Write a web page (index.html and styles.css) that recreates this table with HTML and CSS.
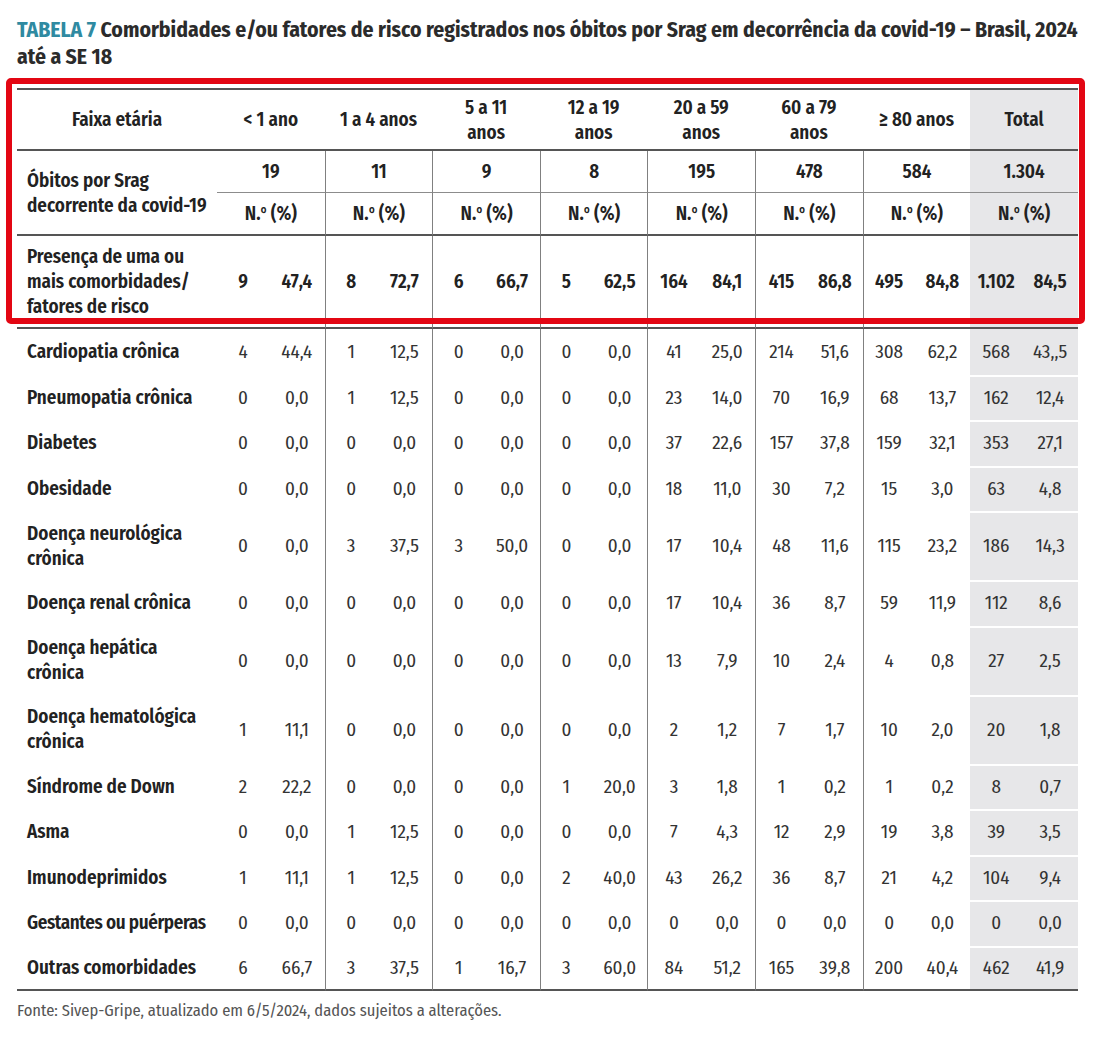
FILE: index.html
```html
<!DOCTYPE html>
<html lang="pt-BR">
<head>
<meta charset="utf-8">
<title>Tabela 7</title>
<link rel="stylesheet" href="styles.css">
</head>
<body>
<div class="page">
  <h1 class="title"><span class="tag">TABELA 7</span> Comorbidades e/ou fatores de risco registrados nos óbitos por Srag em decorrência da covid-19 – Brasil, 2024<br>até a SE 18</h1>
  <div class="wrap">
    <table class="data">
      <colgroup>
        <col class="c-lab">
        <col class="c-n"><col class="c-p"><col class="c-n"><col class="c-p">
        <col class="c-n"><col class="c-p"><col class="c-n"><col class="c-p">
        <col class="c-n"><col class="c-p"><col class="c-n"><col class="c-p">
        <col class="c-n"><col class="c-p"><col class="c-n"><col class="c-p">
      </colgroup>
      <thead>
        <tr class="r1">
          <th class="hlab">Faixa etária</th>
          <th colspan="2">&lt; 1 ano</th>
          <th colspan="2">1 a 4 anos</th>
          <th colspan="2">5 a 11<br>anos</th>
          <th colspan="2">12 a 19<br>anos</th>
          <th colspan="2">20 a 59<br>anos</th>
          <th colspan="2">60 a 79<br>anos</th>
          <th colspan="2">≥ 80 anos</th>
          <th colspan="2" class="t">Total</th>
        </tr>
        <tr class="r2">
          <th rowspan="2" class="lab obitos">Óbitos por Srag<br>decorrente da covid-19</th>
          <td colspan="2">19</td>
          <td colspan="2" class="s">11</td>
          <td colspan="2" class="s">9</td>
          <td colspan="2" class="s">8</td>
          <td colspan="2" class="s">195</td>
          <td colspan="2" class="s">478</td>
          <td colspan="2" class="s">584</td>
          <td colspan="2" class="t">1.304</td>
        </tr>
        <tr class="r3">
          <td colspan="2">N.<span class="ord">º</span> (%)</td>
          <td colspan="2" class="s">N.<span class="ord">º</span> (%)</td>
          <td colspan="2" class="s">N.<span class="ord">º</span> (%)</td>
          <td colspan="2" class="s">N.<span class="ord">º</span> (%)</td>
          <td colspan="2" class="s">N.<span class="ord">º</span> (%)</td>
          <td colspan="2" class="s">N.<span class="ord">º</span> (%)</td>
          <td colspan="2" class="s">N.<span class="ord">º</span> (%)</td>
          <td colspan="2" class="t">N.<span class="ord">º</span> (%)</td>
        </tr>
        <tr class="pres">
          <th class="lab">Presença de uma ou<br>mais comorbidades/<br>fatores de risco</th>
          <td>9</td><td>47,4</td>
          <td class="s">8</td><td>72,7</td>
          <td class="s">6</td><td>66,7</td>
          <td class="s">5</td><td>62,5</td>
          <td class="s">164</td><td>84,1</td>
          <td class="s">415</td><td>86,8</td>
          <td class="s">495</td><td>84,8</td>
          <td class="t">1.102</td><td class="t">84,5</td>
        </tr>
      </thead>
      <tbody>
        <tr>
          <th class="lab">Cardiopatia crônica</th>
          <td>4</td><td>44,4</td><td class="s">1</td><td>12,5</td><td class="s">0</td><td>0,0</td><td class="s">0</td><td>0,0</td>
          <td class="s">41</td><td>25,0</td><td class="s">214</td><td>51,6</td><td class="s">308</td><td>62,2</td><td class="t">568</td><td class="t">43,,5</td>
        </tr>
        <tr>
          <th class="lab">Pneumopatia crônica</th>
          <td>0</td><td>0,0</td><td class="s">1</td><td>12,5</td><td class="s">0</td><td>0,0</td><td class="s">0</td><td>0,0</td>
          <td class="s">23</td><td>14,0</td><td class="s">70</td><td>16,9</td><td class="s">68</td><td>13,7</td><td class="t">162</td><td class="t">12,4</td>
        </tr>
        <tr>
          <th class="lab">Diabetes</th>
          <td>0</td><td>0,0</td><td class="s">0</td><td>0,0</td><td class="s">0</td><td>0,0</td><td class="s">0</td><td>0,0</td>
          <td class="s">37</td><td>22,6</td><td class="s">157</td><td>37,8</td><td class="s">159</td><td>32,1</td><td class="t">353</td><td class="t">27,1</td>
        </tr>
        <tr>
          <th class="lab">Obesidade</th>
          <td>0</td><td>0,0</td><td class="s">0</td><td>0,0</td><td class="s">0</td><td>0,0</td><td class="s">0</td><td>0,0</td>
          <td class="s">18</td><td>11,0</td><td class="s">30</td><td>7,2</td><td class="s">15</td><td>3,0</td><td class="t">63</td><td class="t">4,8</td>
        </tr>
        <tr class="dbl">
          <th class="lab">Doença neurológica<br>crônica</th>
          <td>0</td><td>0,0</td><td class="s">3</td><td>37,5</td><td class="s">3</td><td>50,0</td><td class="s">0</td><td>0,0</td>
          <td class="s">17</td><td>10,4</td><td class="s">48</td><td>11,6</td><td class="s">115</td><td>23,2</td><td class="t">186</td><td class="t">14,3</td>
        </tr>
        <tr>
          <th class="lab">Doença renal crônica</th>
          <td>0</td><td>0,0</td><td class="s">0</td><td>0,0</td><td class="s">0</td><td>0,0</td><td class="s">0</td><td>0,0</td>
          <td class="s">17</td><td>10,4</td><td class="s">36</td><td>8,7</td><td class="s">59</td><td>11,9</td><td class="t">112</td><td class="t">8,6</td>
        </tr>
        <tr class="dbl">
          <th class="lab">Doença hepática<br>crônica</th>
          <td>0</td><td>0,0</td><td class="s">0</td><td>0,0</td><td class="s">0</td><td>0,0</td><td class="s">0</td><td>0,0</td>
          <td class="s">13</td><td>7,9</td><td class="s">10</td><td>2,4</td><td class="s">4</td><td>0,8</td><td class="t">27</td><td class="t">2,5</td>
        </tr>
        <tr class="dbl">
          <th class="lab">Doença hematológica<br>crônica</th>
          <td>1</td><td>11,1</td><td class="s">0</td><td>0,0</td><td class="s">0</td><td>0,0</td><td class="s">0</td><td>0,0</td>
          <td class="s">2</td><td>1,2</td><td class="s">7</td><td>1,7</td><td class="s">10</td><td>2,0</td><td class="t">20</td><td class="t">1,8</td>
        </tr>
        <tr>
          <th class="lab">Síndrome de Down</th>
          <td>2</td><td>22,2</td><td class="s">0</td><td>0,0</td><td class="s">0</td><td>0,0</td><td class="s">1</td><td>20,0</td>
          <td class="s">3</td><td>1,8</td><td class="s">1</td><td>0,2</td><td class="s">1</td><td>0,2</td><td class="t">8</td><td class="t">0,7</td>
        </tr>
        <tr>
          <th class="lab">Asma</th>
          <td>0</td><td>0,0</td><td class="s">1</td><td>12,5</td><td class="s">0</td><td>0,0</td><td class="s">0</td><td>0,0</td>
          <td class="s">7</td><td>4,3</td><td class="s">12</td><td>2,9</td><td class="s">19</td><td>3,8</td><td class="t">39</td><td class="t">3,5</td>
        </tr>
        <tr>
          <th class="lab">Imunodeprimidos</th>
          <td>1</td><td>11,1</td><td class="s">1</td><td>12,5</td><td class="s">0</td><td>0,0</td><td class="s">2</td><td>40,0</td>
          <td class="s">43</td><td>26,2</td><td class="s">36</td><td>8,7</td><td class="s">21</td><td>4,2</td><td class="t">104</td><td class="t">9,4</td>
        </tr>
        <tr>
          <th class="lab tight">Gestantes ou puérperas</th>
          <td>0</td><td>0,0</td><td class="s">0</td><td>0,0</td><td class="s">0</td><td>0,0</td><td class="s">0</td><td>0,0</td>
          <td class="s">0</td><td>0,0</td><td class="s">0</td><td>0,0</td><td class="s">0</td><td>0,0</td><td class="t">0</td><td class="t">0,0</td>
        </tr>
        <tr class="last">
          <th class="lab">Outras comorbidades</th>
          <td>6</td><td>66,7</td><td class="s">3</td><td>37,5</td><td class="s">1</td><td>16,7</td><td class="s">3</td><td>60,0</td>
          <td class="s">84</td><td>51,2</td><td class="s">165</td><td>39,8</td><td class="s">200</td><td>40,4</td><td class="t">462</td><td class="t">41,9</td>
        </tr>
      </tbody>
    </table>
    <div class="highlight"></div>
  </div>
  <p class="source">Fonte: Sivep-Gripe, atualizado em 6/5/2024, dados sujeitos a alterações.</p>
</div>
</body>
</html>
```
FILE: styles.css
```css
html, body {
  margin: 0;
  background: #ffffff;
}

body {
  font-family: "Fira Sans Condensed", "Open Sans", "Noto Sans", sans-serif;
  font-stretch: 75%;
  color: #222222;
}

.page {
  padding: 0 0 0 17px;
  width: 1061px;
}

.title {
  margin: 17px 0 17px;
  font-size: 21.6px;
  line-height: 27px;
  font-weight: 700;
  color: #2b2b2b;
  white-space: nowrap;
}

.title .tag {
  color: #2f8aa1;
}

.wrap {
  position: relative;
}

.highlight {
  position: absolute;
  left: -11px;
  top: -10px;
  width: 1079px;
  height: 246px;
  box-sizing: border-box;
  border: 6px solid #e30613;
  border-radius: 5px;
  pointer-events: none;
}

.data {
  border-collapse: separate;
  border-spacing: 0;
  table-layout: fixed;
  width: 1061px;
}

.c-lab { width: 200px; }
.c-n { width: 52px; }
.c-p { width: 55.6px; }

.data th,
.data td {
  padding: 0;
  font-size: 19px;
  line-height: 25px;
  text-align: center;
  vertical-align: middle;
  color: #333333;
}

.data th {
  font-weight: 600;
  color: #222222;
}

.data td {
  font-weight: 400;
}

.data .lab {
  text-align: left;
  padding-left: 10px;
}

.data .tight {
  letter-spacing: -0.4px;
}

.ord {
  font-family: "Open Sans", sans-serif;
  font-stretch: 75%;
}

/* header row */
.r1 { height: 63px; }
.r1 th {
  border-top: 2px solid #555555;
  border-bottom: 2px solid #555555;
}

.r2 { height: 42px; }
.r2 td {
  border-bottom: 1px solid #8c8c8c;
  font-weight: 600;
  color: #222222;
}

.r3 { height: 43px; }
.r3 td,
.r2 .obitos {
  border-bottom: 2px solid #555555;
}
.r3 td {
  font-weight: 600;
  color: #222222;
}

.pres { height: 93px; }
.pres th,
.pres td {
  border-bottom: 2px solid #555555;
}
.pres td {
  font-weight: 600;
  color: #222222;
}

tbody tr { height: 45.5px; }
tbody tr.dbl { height: 69px; }

tbody tr.last th,
tbody tr.last td {
  border-bottom: 2px solid #555555;
}

.data .s {
  border-left: 1px solid #808080;
}

.data .t {
  background: #e7e7e9;
}

tbody tr + tr .t {
  box-shadow: inset 0 2px 0 #ffffff;
}

.source {
  margin: 10px 0 0;
  font-size: 16.5px;
  line-height: 20px;
  font-weight: 400;
  color: #555555;
}
```
